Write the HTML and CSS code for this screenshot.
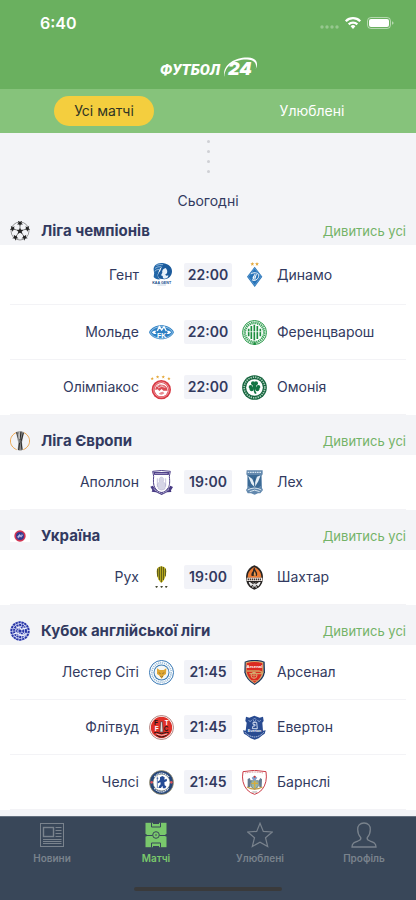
FILE: index.html
```html
<!DOCTYPE html>
<html lang="uk">
<head>
<meta charset="utf-8">
<meta name="viewport" content="width=device-width, initial-scale=1">
<title>Футбол 24</title>
<link rel="stylesheet" href="styles.css">
</head>
<body>
<div class="app">
  <header class="top">
    <div class="status">
      <span class="clock">6:40</span>
      <svg class="status-icons" viewBox="0 0 76 16" aria-hidden="true">
        <g fill="#fff" opacity=".3"><circle cx="4" cy="12" r="1.7"/><circle cx="9" cy="12" r="1.7"/><circle cx="14" cy="12" r="1.7"/><circle cx="19" cy="12" r="1.7"/></g>
        <g fill="none" stroke="#fff" stroke-width="2.3"><path d="M27.8 6.2a10.2 10.2 0 0 1 14.4 0"/><path d="M30.7 9.4a6.1 6.1 0 0 1 8.6 0"/></g>
        <path d="M32.6 11.2a3.5 3.5 0 0 1 4.8 0L35 13.9z" fill="#fff"/>
        <rect x="49.5" y="2.5" width="23" height="11" rx="3.4" fill="none" stroke="#fff" opacity=".5"/>
        <rect x="51" y="4" width="20" height="8" rx="2" fill="#fff"/>
        <path d="M74 6.2q1.6.6 1.6 1.8T74 9.8z" fill="#fff" opacity=".5"/>
      </svg>
    </div>
    <div class="brand">
      <span class="brand-name">ФУТБОЛ</span>
      <span class="brand-num">24
        <svg class="brand-arc" viewBox="0 0 36 22" aria-hidden="true"><path d="M1.600 20C-1.500 9 11 0 25 .5c8 .3 11 5 7.800 11.500C34 6 31 2.600 24 2.400 12 2 1 9 1.600 20z" fill="#fff"/></svg>
      </span>
    </div>
  </header>
  <div class="tabs">
    <div class="tab-cell"><button class="tab tab-active" type="button">Усі матчі</button></div>
    <div class="tab-cell"><button class="tab" type="button">Улюблені</button></div>
  </div>

  <main class="feed">
    <div class="dots" aria-hidden="true"><i></i><i></i><i></i><i></i></div>
    <h1 class="day">Сьогодні</h1>

    <section class="league">
      <div class="league-head">
        <svg class="league-icon" viewBox="0 0 60 60" aria-hidden="true">
          <circle cx="30" cy="30" r="27" fill="none" stroke="#666" stroke-width="2"/>
          <defs><path id="s" d="M0-11 3-4 11-4 5 2 8 10 0 5-8 10-5 2-11-4-3-4z"/></defs>
          <g fill="#222"><use href="#s" x="30" y="30"/>
          <use href="#s" transform="translate(30 7) rotate(180) scale(.8)"/><use href="#s" transform="translate(52 23) rotate(252) scale(.8)"/><use href="#s" transform="translate(43.500 49) rotate(324) scale(.8)"/><use href="#s" transform="translate(16.500 49) rotate(36) scale(.8)"/><use href="#s" transform="translate(8 23) rotate(108) scale(.8)"/></g>
          <path d="M30 14v6M46 25l-6 2M40 43l-4-5M20 43l4-5M14 25l6 2" stroke="#444" stroke-width="2"/>
        </svg>
        <h2>Ліга чемпіонів</h2>
        <a href="#">Дивитись усі</a>
      </div>
      <ul class="matches">
        <li class="match match-lead">
          <span class="home">Гент</span>
          <svg class="crest" viewBox="0 0 75 75" aria-hidden="true">
            <path d="M42 3C24 1 13 10 14 24c0 6 3 9 1 13l-1 8c4 6 12 8 20 7-8-5-10-13-6-20 3-7 3-14 12-18 5-2 9-3 12-8z" fill="#2367a8"/>
            <path d="M47 5c13 2 22 10 22 23S60 51 46 52L33 50C24 45 26 35 33 28c4-7 4-16 14-23z" fill="#1c5b9c"/>
            <path d="M50 18c-8 2-12 8-10 14l-4 8 5 2 1 7c8 3 16-1 16-9-5 3-9 1-9-3 7-2 8-12 1-19z" fill="#e7f1fa"/>
            <path d="M22 10q10-4 20-2M18 19q8-6 19-5M17 28q5-6 14-6" fill="none" stroke="#b9d6ee" stroke-width="2"/>
            <text x="38" y="65" text-anchor="middle" class="crest-text" font-size="11" fill="#174d8a">KAA GENT</text>
            <path d="M25 69h26" stroke="#a8bfd8" stroke-width="2"/>
          </svg>
          <time>22:00</time>
          <svg class="crest" viewBox="0 0 75 75" aria-hidden="true">
            <path id="gold" d="M31 0l1.500 4h4.500l-3.500 3 1.300 4.500L31 9l-3.800 2.500L28.500 7 25 4h4.500z" fill="#e5a93c"/><use href="#gold" x="14"/>
            <path d="M38 14 61 44 38 75 15 44z" fill="#2773b8"/><path d="M38 19 57 44 38 70 19 44z" fill="none" stroke="#8dbce4" stroke-width="1.500"/>
            <path d="M27 36c5-5 21-6 23 4 1 10-9 17-18 15l6-18M32 46c4-5 6-2 3 4M43 36l-5 17" fill="none" stroke="#fff" stroke-width="3"/>
          </svg>
          <span class="away">Динамо</span>
        </li>
        <li class="match">
          <span class="home">Мольде</span>
          <svg class="crest" viewBox="0 0 75 75" aria-hidden="true">
            <path d="M0 37C12 9 62 9 75 37 62 65 12 65 0 37z" fill="#2b7fc4"/><path d="M4 37C15 14 60 14 71 37 60 61 15 61 4 37z" fill="none" stroke="#c9e2f5" stroke-width="2"/>
            <path d="M25 33 31 20l7 10 7-10 7 13" fill="none" stroke="#fff" stroke-width="4"/><path d="M8 37l7-5h8l-5 5 5 5h-8zM67 37l-7-5h-8l5 5-5 5h8z" fill="#fff"/>
            <text x="38" y="54" text-anchor="middle" class="crest-text" font-size="21" fill="#fff">FK</text>
          </svg>
          <time>22:00</time>
          <svg class="crest" viewBox="0 0 75 75" aria-hidden="true">
            <circle cx="37.500" cy="37.500" r="36" fill="#fff" stroke="#2b9a4b" stroke-width="3"/><circle cx="37.500" cy="37.500" r="29" fill="none" stroke="#3ba45a" stroke-width="8" stroke-dasharray="4 2"/>
            <circle cx="37.500" cy="37.500" r="24" fill="#fff"/><path d="M20 26v23M28 18v39M37 14v47M46 18v39M55 26v23" stroke="#1d8d3e" stroke-width="5"/>
            <path d="M18 35h39" stroke="#fff" stroke-width="2"/><circle cx="38" cy="71" r="4" fill="#1d8d3e"/>
          </svg>
          <span class="away">Ференцварош</span>
        </li>
        <li class="match">
          <span class="home">Олімпіакос</span>
          <svg class="crest" viewBox="0 0 75 75" aria-hidden="true">
            <g transform="translate(-15 3) scale(.85)"><use href="#gold" x="-2" y="3"/><use href="#gold" x="17" y="-3"/><use href="#gold" x="37" y="-3"/><use href="#gold" x="57" y="3"/></g>
            <circle cx="37" cy="44" r="29" fill="#d83943"/><circle cx="37" cy="44" r="23" fill="none" stroke="#f6c4c8" stroke-width="2"/><circle cx="37" cy="44" r="20" fill="#fff"/>
            <path d="M19 45c-1-18 25-23 34-8l3 10H43l-5-5-7 6-5-5z" fill="#db4a53"/><path d="M27 39q10-9 22-2M24 35l7-4M34 30h10" stroke="#fff" stroke-width="2" fill="none"/><path d="M29 56q9 7 17-1l-4-5-7 2z" fill="#e88a90"/>
          </svg>
          <time>22:00</time>
          <svg class="crest" viewBox="0 0 75 75" aria-hidden="true">
            <circle cx="37.500" cy="37.500" r="37" fill="#14633d"/><circle cx="37.500" cy="37.500" r="31" fill="none" stroke="#a8cfb9" stroke-width="5" stroke-dasharray="4 3"/><circle cx="37.500" cy="37.500" r="25" fill="#fff"/>
            <g fill="#107342"><circle cx="33" cy="25" r="6"/><circle cx="42" cy="25" r="6"/><circle cx="26" cy="36" r="6"/><circle cx="29" cy="43" r="6"/><circle cx="49" cy="36" r="6"/><circle cx="46" cy="43" r="6"/><path d="M31 28h13l-2 7 4 3v6l-7-3q0 8 5 14l-5 2q-5-7-4-16l-6 3v-6l4-3z"/></g>
          </svg>
          <span class="away">Омонія</span>
        </li>
      </ul>
    </section>

    <section class="league">
      <div class="league-head">
        <svg class="league-icon" viewBox="0 0 60 60" aria-hidden="true">
          <path d="M20 4C-5 15-5 45 20 56M40 4c25 11 25 41 0 52" fill="none" stroke="#eca752" stroke-width="3"/>
          <path d="M18 4q12-7 24 0L36 34l2 22q-8 5-15 0l2-20z" fill="#888"/><path d="M20 4l9 29-3 24M33 2l-3 26M40 6L33 32l3 24" stroke="#2a2a2a" stroke-width="3" fill="none"/><path d="M28 2l1 22M24 8l4 27" stroke="#ddd" stroke-width="2"/>
        </svg>
        <h2>Ліга Європи</h2>
        <a href="#">Дивитись усі</a>
      </div>
      <ul class="matches">
        <li class="match">
          <span class="home">Аполлон</span>
          <svg class="crest" viewBox="0 0 75 75" aria-hidden="true">
            <path d="M11 4q27-5 53 0l-3 15c2 18 1 26-3 34q-7 12-20 18Q25 65 18 54C12 44 13 30 14 19z" fill="#fff" stroke="#51428a" stroke-width="3"/>
            <path d="M13 6h49l-3 9H16z" fill="#51428a"/><path d="M19 11h37" stroke="#d4cfeb" stroke-width="3" stroke-dasharray="4 2"/>
            <path d="M37 21c-7 1-8 9-6 14l-6 8 3 14q10 7 20 0l2-15-7-7c3-8 1-13-6-14z" fill="#d6d5e6" stroke="#a29fc2"/><path d="M25 25v26M50 25v25" stroke="#a9a5cc" stroke-width="2"/>
            <path d="M4 50l8-3q8 17 26 19 17-2 26-19l8 4-6 10 1 5-13 1-16 8-17-8-13-2 2-5z" fill="#473a83"/><path d="M14 57q10 9 24 13 14-4 23-13" fill="none" stroke="#d8d5ec" stroke-width="3" stroke-dasharray="4 2"/>
          </svg>
          <time>19:00</time>
          <svg class="crest" viewBox="0 0 75 75" aria-hidden="true">
            <path d="M14 1h48v12l-3 4 1 37 3 6-8 10H48l-10 4-11-4H17l-5-10 4-6V17l-3-4z" fill="#6288ad"/><path d="M17 7h42" stroke="#d5e4ef" stroke-width="4" stroke-dasharray="5 2"/>
            <path d="M18 15h39v31l-8 8H26l-8-8z" fill="#3b6a95"/><path d="M18 17l13 10 6 15 8-22 11-4-7 18-11 18-10-11z" fill="#e5eff6"/><path d="M38 22v28" stroke="#2d5d88" stroke-width="3"/>
            <path d="M17 60q20-12 41 0M23 65q15-9 30 0" fill="none" stroke="#d8e6ef" stroke-width="3"/>
          </svg>
          <span class="away">Лех</span>
        </li>
      </ul>
    </section>

    <section class="league">
      <div class="league-head">
        <svg class="league-icon" viewBox="0 0 60 60" aria-hidden="true">
          <path d="M0 12h60v36H0z" fill="#fff"/><circle cx="30" cy="30" r="17" fill="#d23553"/><circle cx="30" cy="30" r="12" fill="#343b91"/><path d="M22 32l7-7 3 4 7-3-5 8-5-3-4 5zM24 38l12-15" fill="#b9bcec" stroke="#ccd"/>
        </svg>
        <h2>Україна</h2>
        <a href="#">Дивитись усі</a>
      </div>
      <ul class="matches">
        <li class="match">
          <span class="home">Рух</span>
          <svg class="crest" viewBox="0 0 75 75" aria-hidden="true">
            <path d="M37 4q15 2 15 15-1 20-11 31l-4 3-4-3Q23 39 23 19 23 6 37 4z" fill="#cbbb20"/><path d="M26 11v24M31 6v39M37 4v48M43 6v39M49 11v23" stroke="#343718" stroke-width="2.500"/>
            <g fill="#464933"><path d="M19 63h8l-3 5h-3zM34 63h8l-3 5h-3zM48 63h8l-3 5h-3z"/></g>
          </svg>
          <time>19:00</time>
          <svg class="crest" viewBox="0 0 75 75" aria-hidden="true">
            <path d="M37 1C19 8 12 23 12 38s8 30 25 36c18-6 26-21 26-36S56 8 37 1z" fill="#262322"/><path d="M37 6C23 13 17 24 17 38h41C58 24 52 13 37 6z" fill="#eb7b34"/>
            <path d="M29 33q-3-8 4-15 0-8 5-12 0 7 4 12 6 8 2 15" fill="#2b2421"/><path d="M35 32q0-9 3-14 3 5 4 14z" fill="#f4a04f"/><path d="M14 38h47v10H14z" fill="#f2ebe6"/><path d="M17 43h41" stroke="#40342f" stroke-width="5" stroke-dasharray="4 2"/>
            <path d="M20 51h14v18Q24 65 20 51zM41 51h15q-4 13-15 18z" fill="#eee"/><path d="M26 66L49 50M26 50l23 16" stroke="#312b28" stroke-width="4"/><circle cx="37.500" cy="60" r="5" fill="#ddd"/>
          </svg>
          <span class="away">Шахтар</span>
        </li>
      </ul>
    </section>

    <section class="league">
      <div class="league-head">
        <svg class="league-icon" viewBox="0 0 60 60" aria-hidden="true">
          <circle cx="30" cy="30" r="30" fill="#d9def7"/><g fill="none" stroke="#2835a6" stroke-width="6"><circle cx="30" cy="30" r="26" stroke-dasharray="7 2"/><circle cx="30" cy="30" r="18" stroke-dasharray="6 2"/><circle cx="30" cy="30" r="10" stroke-dasharray="5 2"/></g><circle cx="30" cy="30" r="5" fill="#2835a6"/>
          <path d="M20 22q8-6 14 3l14-4M12 39q11-6 16 1l12 4 8-6" fill="none" stroke="#eef0fb" stroke-width="4"/>
        </svg>
        <h2>Кубок англійської ліги</h2>
        <a href="#">Дивитись усі</a>
      </div>
      <ul class="matches">
        <li class="match">
          <span class="home">Лестер Сіті</span>
          <svg class="crest" viewBox="0 0 75 75" aria-hidden="true">
            <circle cx="37.500" cy="37.500" r="36" fill="#fff" stroke="#3677b4" stroke-width="3"/><circle cx="37.500" cy="37.500" r="29" fill="none" stroke="#8bb2d2" stroke-width="5" stroke-dasharray="3 3"/><circle cx="37.500" cy="37.500" r="24" fill="#3678b2"/><circle cx="37.500" cy="37.500" r="21" fill="#f5f7f5"/>
            <path d="M24 25l8 5h12l8-5-1 17-6 4-7 10-8-10-6-4z" fill="#dfa733"/><path d="M29 38l6 3M46 38l-6 3M34 48l4 4 4-4" stroke="#74592b" stroke-width="2" fill="none"/>
          </svg>
          <time>21:45</time>
          <svg class="crest" viewBox="0 0 75 75" aria-hidden="true">
            <path d="M8 5q29-11 60 0l1 32Q65 61 38 75 12 61 7 37z" fill="#17335d"/><path d="M11 7q27-8 53 0l1 30Q61 58 38 71 15 59 11 37z" fill="#d7a96e"/><path d="M14 10q24-8 47 0v26q-4 20-23 32Q18 56 14 36z" fill="#dc2920"/>
            <text x="37.500" y="25" text-anchor="middle" class="crest-text" font-size="13" fill="#fff">Arsenal</text><path d="M15 33h36l8 3-1 5H45M22 41h20" stroke="#d0a563" stroke-width="4" fill="none"/><circle cx="36" cy="46" r="9" fill="none" stroke="#d9ab73" stroke-width="3"/><path d="M36 37v18M27 46h18M29 62h17" stroke="#d9ab73" stroke-width="2"/>
          </svg>
          <span class="away">Арсенал</span>
        </li>
        <li class="match">
          <span class="home">Флітвуд</span>
          <svg class="crest" viewBox="0 0 75 75" aria-hidden="true">
            <circle cx="37.500" cy="37.500" r="36" fill="#fff" stroke="#8c4540" stroke-width="2"/><circle cx="37.500" cy="37.500" r="32" fill="#df3028"/>
            <g class="crest-text" font-size="19"><text x="15" y="30" fill="#231716">F</text><text x="47" y="30" fill="#fff">T</text><text x="17" y="49" fill="#fff">F</text><text x="44" y="49" fill="#231716">C</text></g>
            <path d="M35 20h5l2 31h-9z" fill="#ddd" stroke="#2b1f1e" stroke-width="1.500"/><path d="M15 54q8-4 15 0t15 0 15 0M21 59q9 8 17 7 9 0 18-8" stroke="#221918" stroke-width="3" fill="none"/><path d="M22 57q16 8 33 0" stroke="#fff" stroke-width="2" fill="none"/>
          </svg>
          <time>21:45</time>
          <svg class="crest" viewBox="0 0 75 75" aria-hidden="true">
            <path d="M12 5l10 3 15-6 16 6 10-3 2 13-4 5 2 24 8-1-3 10-7 5-11 9-12 4-12-4-12-9-8-5-3-10 8 1 3-24-4-5z" fill="#294b91"/>
            <path d="M20 15q4 10 9 0M33 14l5-5 4 5-4 8zM47 15q4 10 9 0" stroke="#a9bce2" stroke-width="2" fill="none"/><path d="M33 22h11l2 19H31l2-8h6v-5h-6z" fill="none" stroke="#eef3ff" stroke-width="2.500"/>
            <text x="37.500" y="52" text-anchor="middle" class="crest-text" font-size="11" fill="#fff">Everton</text><path d="M9 52q12 13 29 14 16-1 27-14" stroke="#d9e3f9" stroke-width="2.500" stroke-dasharray="4 2" fill="none"/>
          </svg>
          <span class="away">Евертон</span>
        </li>
        <li class="match">
          <span class="home">Челсі</span>
          <svg class="crest" viewBox="0 0 75 75" aria-hidden="true">
            <circle cx="37.500" cy="37.500" r="36" fill="#244579" stroke="#a99766" stroke-width="2"/><path d="M16 21Q37-2 60 21M16 55q21 22 43 0" stroke="#e6ebf3" stroke-width="4" stroke-dasharray="4 2" fill="none"/><circle cx="8" cy="37" r="4" fill="#d8545c"/><circle cx="67" cy="37" r="4" fill="#d8545c"/><circle cx="37.500" cy="37.500" r="25" fill="#fff" stroke="#aaa06e"/>
            <path d="M33 22l7-4 7 4-1 7 7-3 1 7-8 4 1 9 5 3-3 6h-7l-2-8-4 7h-8l3-7 4-4-1-7-6 4-3-4 7-5 1-3z" fill="#244b94"/><path d="M25 20v34M23 25h5" stroke="#244b94" stroke-width="2"/>
          </svg>
          <time>21:45</time>
          <svg class="crest" viewBox="0 0 75 75" aria-hidden="true">
            <path d="M3 5q34-8 69 0 5 33-12 54-9 10-22 14Q24 69 15 59-3 38 3 5z" fill="#fff" stroke="#cb3d48" stroke-width="3"/><path d="M10 9q27-6 54 0" stroke="#ce7d83" stroke-width="3" stroke-dasharray="3 2" fill="none"/>
            <path d="M27 32h22v16q-4 7-11 10-8-3-11-10z" fill="#9ab6a6" stroke="#586d71" stroke-width="2"/><path d="M28 40h20M38 33v22" stroke="#d6ad3e" stroke-width="4"/><path d="M17 27l6-3 4 9-2 18h-8zM50 32l5-8 5 4-1 23h-7z" fill="#63788e"/><path d="M29 23l8-6 9 6-5 7h-8z" fill="#829cca"/><circle cx="38" cy="20" r="3" fill="#c33"/><path d="M15 51q23 13 46 0" stroke="#c59c42" stroke-width="4" fill="none"/><path d="M31 66h14" stroke="#777" stroke-width="2"/>
          </svg>
          <span class="away">Барнслі</span>
        </li>
      </ul>
    </section>
  </main>

  <nav class="bar">
    <div class="bar-items">
      <a class="bar-item" href="#">
        <svg viewBox="0 0 26 26" aria-hidden="true" fill="none" stroke="currentColor"><rect x="1.500" y="1.500" width="23" height="23"/><rect x="4.500" y="5.500" width="10" height="9" stroke-width="1.400"/><path d="M16.500 5.500h6M16.500 8.500h6M16.500 11.500h6M16.500 14.500h6M4 17.500h18.500M4 19.500h18.500M4 21.500h18.500"/></svg>
        <span>Новини</span>
      </a>
      <a class="bar-item bar-item-active" href="#" aria-current="page">
        <svg viewBox="0 0 26 26" aria-hidden="true"><path d="M2.500 .8h21v24.400h-21z" fill="currentColor"/><g fill="none" stroke="#394759"><path d="M2 13.500h7.500M16.500 13.500H24M8.500 .5v4.500h9V.5M8.500 25.500v-4.500h9v4.500"/><circle cx="13" cy="13" r="3.300"/></g><circle cx="13" cy="13" r=".8" fill="#394759"/><path d="M10 0h6v2h-6zM10 24h6v2h-6zM2 12h1.500v2.500H2zM22.500 12H24v2.500h-1.500z" fill="#394759"/></svg>
        <span>Матчі</span>
      </a>
      <a class="bar-item" href="#">
        <svg viewBox="0 0 26 26" aria-hidden="true" fill="none" stroke="currentColor" stroke-width="1.200"><path d="M13 1.300 16.300 9.400 25.300 10 18.500 15.700 20.700 24.500 13 20.200 5.300 24.500 7.500 15.700 .7 10 9.700 9.400z"/></svg>
        <span>Улюблені</span>
      </a>
      <a class="bar-item" href="#">
        <svg viewBox="0 0 26 26" aria-hidden="true" fill="none" stroke="currentColor" stroke-width="1.300"><path d="M13 1C8.700 1 6.500 4 6.700 7.500c0 4 1.300 6.300 3.100 8.200.5 1.800-.3 2.500-2.800 3.300-3.500 1.200-6 2-6 6h24c0-4-2.500-4.800-6-6-2.500-.8-3.300-1.500-2.800-3.300 1.800-1.900 3.100-4.200 3.100-8.200C19.500 4 17.300 1 13 1z"/></svg>
        <span>Профіль</span>
      </a>
    </div>
    <div class="home-indicator"></div>
  </nav>
</div>
</body>
</html>
```
FILE: styles.css
```css
* { box-sizing: border-box; }
body { margin: 0; font-family: Inter, "Liberation Sans", sans-serif; font-size: 14px; line-height: 20px; color: #323a60; }
h1, h2, ul { margin: 0; padding: 0; font-size: inherit; font-weight: inherit; list-style: none; }
a { color: inherit; text-decoration: none; }

.app { height: 100vh; display: flex; flex-direction: column; background: #f3f4f7; }

.top { flex: none; background: #6ab05f; color: #fff; padding: 13px 22px 8px 40px; }
.status { display: flex; justify-content: space-between; align-items: center; height: 20px; }
.clock { font-size: 16px; font-weight: 600; }
.status-icons { width: 76px; height: 16px; }
.brand { display: flex; justify-content: center; align-items: baseline; gap: 8px; margin-top: 24px; padding-right: 22px; height: 24px; line-height: 24px; font-style: italic; font-weight: 900; }
.brand-name { font-family: Roboto, sans-serif; font-size: 15px; }
.brand-num { position: relative; font-size: 18px; }
.brand-arc { position: absolute; left: -5px; top: 0; width: 36px; height: 22px; }

.tabs { flex: none; display: grid; grid-template-columns: 1fr 1fr; height: 44px; background: #86c37b; }
.tab-cell { display: flex; align-items: center; justify-content: center; }
.tab { height: 30px; padding: 0 20px; border: 0; border-radius: 15px; background: none; font: inherit; color: #fff; }
.tab-active { background: #f4ce3e; color: #303524; }

.feed { flex: 1; min-height: 0; overflow-y: auto; scrollbar-width: none; }
.dots { display: flex; flex-direction: column; align-items: center; gap: 7px; padding-top: 7px; }
.dots i { width: 3px; height: 3px; border-radius: 50%; background: #cfd0d5; }
.day { margin-top: 18px; text-align: center; }

.league { padding-top: 12px; }
.day + .league { padding-top: 6px; }
.league-head { display: flex; align-items: center; gap: 11px; height: 28px; padding: 0 10px; }
.league-icon { width: 20px; height: 20px; }
.league-head h2 { flex: 1; font-size: 15px; font-weight: 700; }
.league-head a { font-size: 13px; color: #73b368; }

.matches { background: #fff; }
.match { display: grid; grid-template-columns: 1fr 25px 48px 25px 1fr; column-gap: 10px; align-items: center; height: 55px; margin: 0 10px; border-bottom: 1px solid #f3f3f6; }
.match-lead { height: 60px; }
.home { text-align: right; }
.crest { width: 25px; height: 25px; }
.crest-text { font-family: "Liberation Sans", sans-serif; font-weight: 700; }
.match time { height: 24px; line-height: 24px; border-radius: 2px; background: #f2f3f8; text-align: center; font-weight: 600; }

.bar { flex: none; background: #394759; border-top: 1px solid #64707f; color: #7a838d; padding: 5px 0 9px; }
.bar-items { display: grid; grid-template-columns: repeat(4, 1fr); }
.bar-item { display: flex; flex-direction: column; align-items: center; gap: 3px; font-size: 10px; font-weight: 600; line-height: 14px; }
.bar-item svg { width: 26px; height: 26px; }
.bar-item-active { color: #79c86c; }
.home-indicator { width: 148px; height: 4px; margin: 22px auto 0; border-radius: 2px; background: #3a3a3b; }
```
